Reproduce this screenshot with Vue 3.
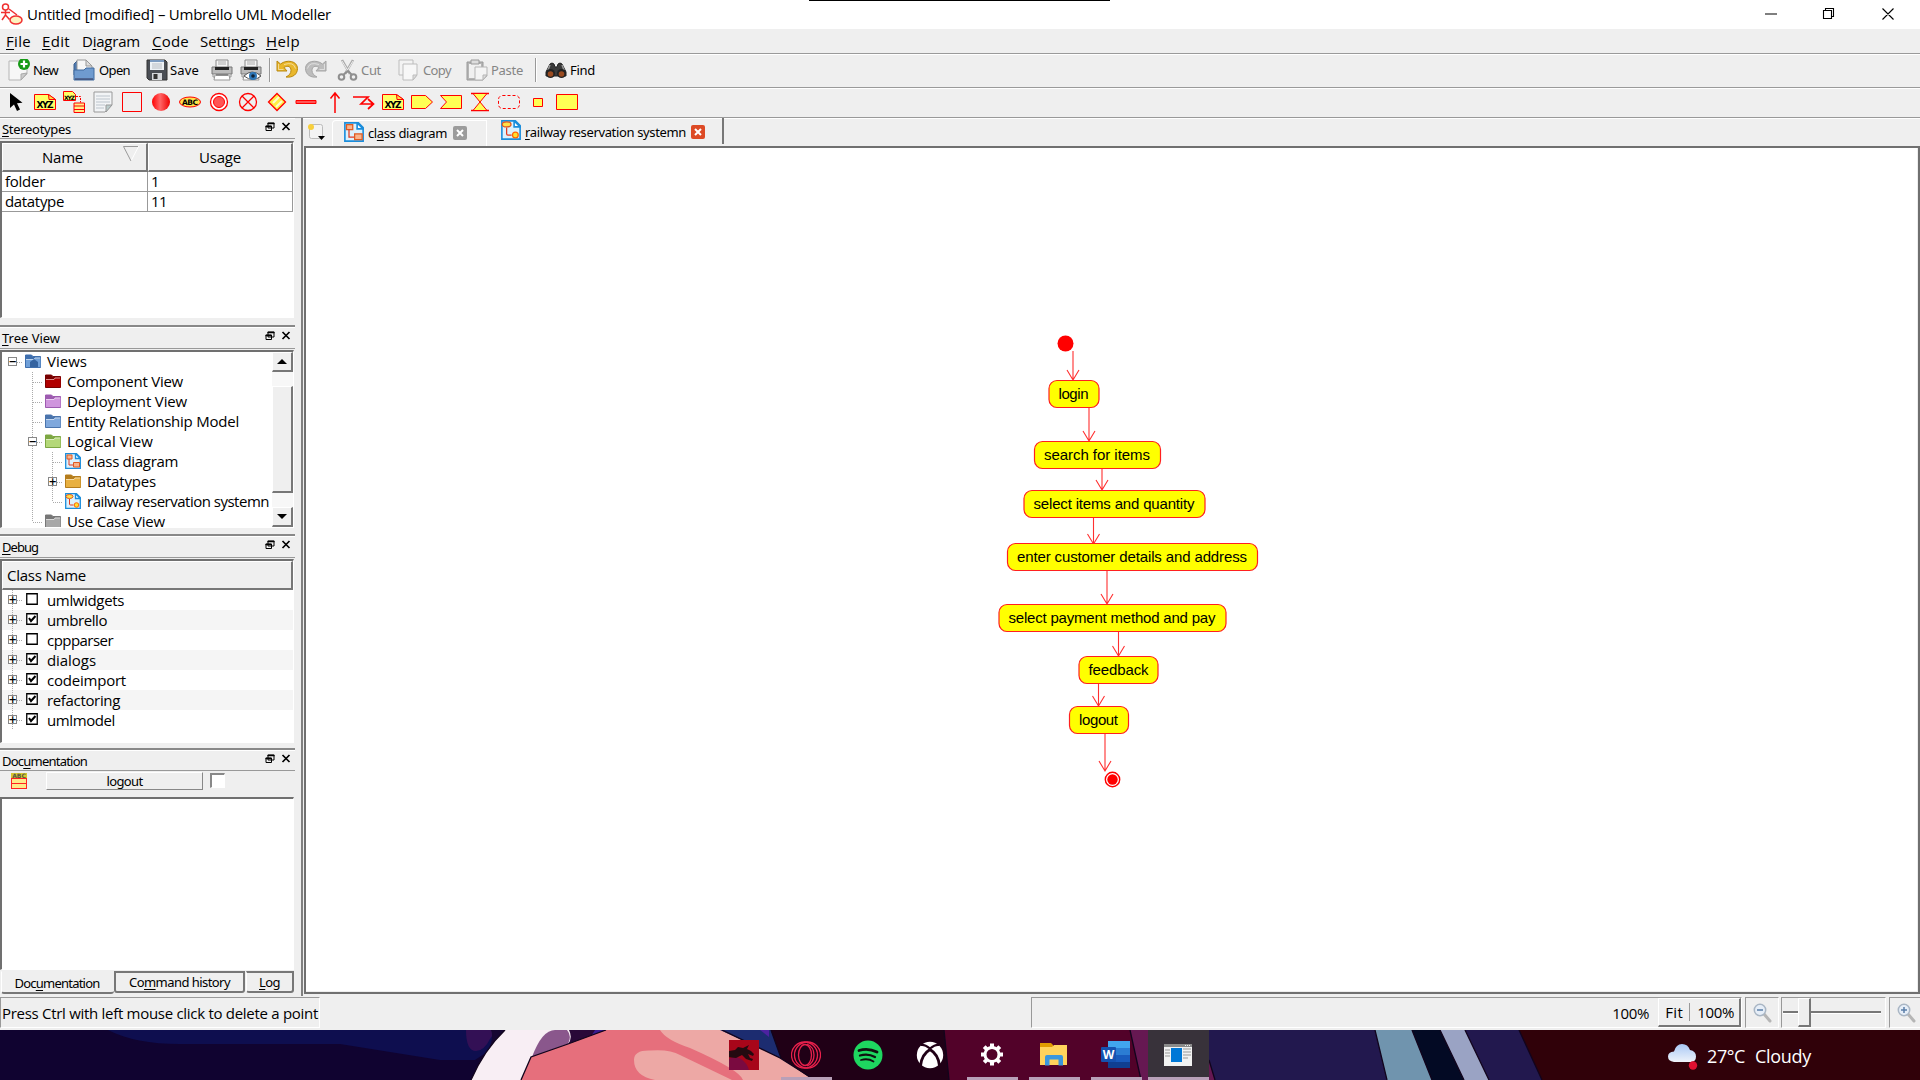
<script setup>
import { h, ref, onMounted } from 'vue'

// Text label: "&" marks the mnemonic letter, w is the advance width of the text
const Lbl = {
  props: { t: String, w: Number },
  setup(props) {
    const el = ref(null)
    onMounted(() => {
      if (!props.w) return
      const n = props.t.replace('&', '').length
      const now = el.value.getBoundingClientRect().width
      el.value.style.letterSpacing = (props.w - now) / n + 'px'
    })
    return () => {
      const i = props.t.indexOf('&')
      const kids = i < 0 ? [props.t] : [props.t.slice(0, i), h('u', props.t[i + 1]), props.t.slice(i + 2)]
      return h('span', { ref: el, class: 'lbl' }, kids)
    }
  },
}

const menus = [
  ['&File', 25, 36], ['&Edit', 28, 40], ['D&iagram', 58, 70], ['&Code', 37, 48], ['Setti&ngs', 55, 66], ['&Help', 34, 40],
]

const printer = `<path d="M5 1h12v9H5z" fill="#f4f4f4" stroke="#888"/><path d="M7 3h8M7 5h8" stroke="#aaa"/><path d="M1 8h20v7H1z" fill="#bbb" stroke="#777"/><path d="M4 8h14v3H4z" fill="#222"/><path d="M2 15h18v3H2z" fill="#ececec" stroke="#999"/><path d="M4 16h14l1 5H3z" fill="#fff" stroke="#999"/><path d="M5 16h12" stroke="#555"/>`
const arrowBack = (a, b) => `<path d="M1 2v10h10L8 8.500c4-2.500 7-1 7 3 0 3-2 5-5 6.500 7 1 11.500-3 11.500-8.500C21.500 2 11 0 4.500 5z" fill="${a}" stroke="${b}"/><path d="M2.500 5v5.500h5M8 5.500q10-3 11.500 4" fill="none" stroke="#fff" opacity=".5"/>`
const actions = [
  { w: 65, t: 'New', tw: 25, g: 3, i: `<path d="M1 2h18v13l-6 6H1z" fill="#f7f7f7" stroke="#b5b5b5"/><path d="M19 14l-6 7v-6z" fill="#ccc" stroke="#aaa"/><circle cx="16" cy="5" r="6" fill="#169a16"/><path d="M16 1.500v7M12.500 5h7" stroke="#fff" stroke-width="2.200"/>` },
  { w: 73, t: 'Open', tw: 31, g: 4, i: `<path d="M1 5l3-3h6v14H1z" fill="#4f7ab0" stroke="#3b5f8d"/><path d="M4 1h9l6 6v8H4z" fill="#f6f6f6" stroke="#999"/><path d="M13 1v6h6z" fill="#ddd" stroke="#999"/><path d="M1 11h10l2-2h8v12H1z" fill="#6f9bcf" stroke="#416a9e"/><path d="M2 20h18" stroke="#335"/>` },
  { w: 65, t: 'Save', tw: 29, g: 2, i: `<path d="M1 1h18l2 2v18H3l-2-2z" fill="#4a4e55" stroke="#333"/><path d="M4 1h14v10H4z" fill="#eef2f6"/><path d="M4 1h14v2H4z" fill="#7d9bc0"/><path d="M6 5h10M6 7h10M6 9h10" stroke="#b8bcc2"/><path d="M6 14h10v7H6z" fill="#d5d8dc"/><path d="M7.500 15h4v5h-4z" fill="#333"/>` },
  { w: 29, i: printer },
  { w: 29, i: printer + `<path d="M4 17q8-8 17 0q-8 7-17 0z" fill="#fff" stroke="#555"/><circle cx="13" cy="17" r="4" fill="#2d77b8"/><circle cx="13" cy="17" r="1.800" fill="#123"/>` },
  { sep: 1, w: 7 },
  { w: 29, i: arrowBack('#e9b72c', '#b98810') },
  { w: 32, i: `<g transform="translate(22 0) scale(-1 1)">${arrowBack('#bdbdbd', '#a5a5a5')}</g>` },
  { w: 61, off: 1, t: 'Cut', tw: 20, g: 2, i: `<path d="M5 1l8 14M16 1L8 15" stroke="#aaa" stroke-width="2.500"/><path d="M5 2l8 13M16 2L8 15" stroke="#eee"/><circle cx="4.500" cy="18" r="2.800" fill="none" stroke="#8f8f8f" stroke-width="2"/><circle cx="16.500" cy="18" r="2.800" fill="none" stroke="#8f8f8f" stroke-width="2"/><path d="M6 16l5-4 4 4" fill="none" stroke="#8f8f8f" stroke-width="2"/>` },
  { w: 68, off: 1, t: 'Copy', tw: 28, g: 3, i: `<path d="M1 1h14v15H1z" fill="#f3f3f3" stroke="#bdbdbd"/><path d="M5 5h14v11l-4 5H5z" fill="#f7f7f7" stroke="#bdbdbd"/><path d="M19 16h-4v5z" fill="#ddd" stroke="#bdbdbd"/>` },
  { w: 69, off: 1, t: 'Paste', tw: 32, g: 3, i: `<path d="M1 3h16v18H1z" fill="#b5b5b5" stroke="#999"/><path d="M3 5h12v14H3z" fill="#f0f0f0"/><path d="M5 1h8v4H5z" fill="#ddd" stroke="#999"/><path d="M9 8h12v9l-4 4H9z" fill="#f4f4f4" stroke="#b5b5b5"/><path d="M21 16h-4v5z" fill="#ddd" stroke="#b5b5b5"/>` },
  { sep: 1, w: 10 },
  { w: 60, t: 'Find', tw: 25, g: 3, i: `<path d="M5 5q2-2 4 0l1 3h2l1-3q2-2 4 0l4 8v4H1v-4z" fill="#3a3a3a" stroke="#222"/><path d="M5 6l-2 5M17 6l2 5" stroke="#999" stroke-width="1.500"/><circle cx="5.500" cy="14.500" r="4.500" fill="#222"/><circle cx="16.500" cy="14.500" r="4.500" fill="#222"/><circle cx="5.500" cy="15" r="2.800" fill="#9a4b20"/><circle cx="16.500" cy="15" r="2.800" fill="#9a4b20"/>` },
]

const R = 'stroke="#f00"'
const xyz = `<path d="M0.500 3.500h14l7 5v10h-21z" fill="#ff6" ${R}/><path d="M14.500 3.500l.5 5h6.500z" fill="#fd4" ${R}/><text x="11" y="17" font-size="9" font-weight="bold" text-anchor="middle" textLength="17" font-family="DejaVu Sans">XYZ</text>`
const tools = [
  `<path d="M5 2v15l4-3.500 3 6.500 3-1.500-3-6.300 5.500-.5z" fill="#000"/>`,
  xyz,
  `<path d="M0.500 0.500h9l3 3v6h-12z" fill="#ff6" ${R}/><text x="6.500" y="8.500" font-size="6" font-weight="bold" text-anchor="middle" textLength="11" font-family="DejaVu Sans">XYZ</text><path d="M13 5.500h4.500v6" fill="none" ${R} stroke-dasharray="2 1"/><path d="M11 12h10.500v9.500H11z" fill="#fe8" ${R}/><path d="M11 15h10M11 18.500h10" ${R}/>`,
  `<path d="M2 1h18v13l-7 7H2z" fill="#f2f4f6" stroke="#999"/><path d="M4 5h14M4 8h14M4 11h14M4 14h9M4 17h8" stroke="#bcc4cc"/><path d="M20 14h-6v7z" fill="#bcc" stroke="#999"/>`,
  `<path d="M1.500 1.500h19v19h-19z" fill="none" ${R}/>`,
  `<defs><linearGradient id="ball"><stop offset="0" stop-color="#f00"/><stop offset=".45" stop-color="#f66"/><stop offset="1" stop-color="#e00"/></linearGradient></defs><circle cx="11" cy="11" r="9" fill="url(#ball)"/>`,
  `<ellipse cx="11" cy="11" rx="10.500" ry="5" fill="#ffe24a" ${R}/><text x="11" y="13.800" font-size="7.500" font-weight="bold" text-anchor="middle" textLength="16" font-family="DejaVu Sans">ABC</text>`,
  `<circle cx="11" cy="11" r="8.500" fill="#fff" ${R} stroke-width="1.300"/><circle cx="11" cy="11" r="5.500" fill="#f55" ${R}/>`,
  `<circle cx="11" cy="11" r="8.500" fill="none" ${R} stroke-width="1.300"/><path d="M5 5l12 12M17 5L5 17" ${R} stroke-width="1.300"/>`,
  `<path d="M11 2.500l8.500 8.500-8.500 8.500L2.500 11z" fill="#fe4" ${R} stroke-width="1.300"/><path d="M7 12l6-6M10 16l6-6" stroke="#fffbd0" stroke-width="2"/>`,
  `<path d="M1 9.500h20v3H1z" fill="#f55" ${R}/>`,
  `<path d="M11 22V2M6.500 7.500L11 2l4.500 5.500" fill="none" ${R} stroke-width="1.500"/>`,
  `<path d="M0 6h15L8 13h12M15 8l5.500 5-5.500 5" fill="none" ${R} stroke-width="1.700"/>`,
  xyz,
  `<path d="M0.500 4.500h14l7 6.500-7 6.500h-14z" fill="#ff5" ${R}/>`,
  `<path d="M0.500 4.500h21v13h-21l6-6.500z" fill="#ff5" ${R}/>`,
  `<path d="M2 2.500h18M2 19.500h18" ${R} stroke-width="1.500"/><path d="M4 2.500h14L4 19.500h14z" fill="#ff5" ${R}/>`,
  `<rect x=".5" y="4.500" width="21" height="13" rx="4" fill="none" ${R} stroke-dasharray="3 2"/>`,
  `<path d="M6.500 7.500h9v8h-9z" fill="#ff5" ${R}/>`,
  `<path d="M0.500 3.500h21v15h-21z" fill="#ff5" ${R}/>`,
]

const folder = (a, b) => `<path d="M0.500 2h6l1.500 1.500h7.500V14.500H.5z" fill="${b}" stroke="${b}"/><path d="M1 6h8l1-1.500h5.500V14H1z" fill="${a}"/><path d="M1 6.500h8l1-1.500h5" fill="none" stroke="#fff" opacity=".55"/>`
const sheet = `<path d="M0.700 0.700h10.800l3.800 3.800v10.800H.7z" fill="#dcf1fd" stroke="#1b8ddb" stroke-width="1.300"/><path d="M10.500.7v4.800h4.800z" fill="#fff" stroke="#1b8ddb" stroke-width="1.300"/>`
const classIcon = sheet + `<path d="M2 2h5v4H2zM8.500 9.500h6v4.500h-6z" fill="#f9b48c" stroke="#e05a20"/><path d="M4 6v6h4" fill="none" stroke="#e03a20"/>`
const actIcon = sheet + `<ellipse cx="4.500" cy="3.500" rx="3.500" ry="2" fill="#ffe04a" stroke="#e05a20"/><path d="M4.500 6v5q0 1 1 1h3" fill="none" stroke="#e03a20"/><circle cx="11.500" cy="12" r="2.300" fill="#ffdf30" stroke="#f60"/>`

const tree = [
  { d: 0, box: '−', t: 'Views', w: 40, i: folder('#6f9fd8', '#3f6fae') + '<path d="M5 14V9l4-3 4 3v5z" fill="#3463a0"/>' },
  { d: 1, t: 'Component View', w: 116, i: folder('#b00000', '#780000') },
  { d: 1, t: 'Deployment View', w: 120, i: folder('#cf95dd', '#9d5bb0') },
  { d: 1, t: 'Entity Relationship Model', w: 172, i: folder('#7fa8dc', '#4a74ac') },
  { d: 1, box: '−', t: 'Logical View', w: 86, i: folder('#b4d878', '#7da743') },
  { d: 2, t: 'class diagram', w: 91, i: classIcon },
  { d: 2, box: '+', t: 'Datatypes', w: 69, i: folder('#e8b040', '#b57d1c') },
  { d: 2, t: 'railway reservation systemn', w: 182, i: actIcon },
  { d: 1, t: 'Use Case View', w: 98, i: folder('#a8a8a8', '#777') },
]
const classes = [
  ['umlwidgets', 0, 77], ['umbrello', 1, 60], ['cppparser', 0, 66], ['dialogs', 1, 49],
  ['codeimport', 1, 79], ['refactoring', 1, 73], ['umlmodel', 1, 68],
]

const nodes = [
  ['login', 1049, 380.5, 50, 30], ['search for items', 1034.5, 441.5, 126, 106], ['select items and quantity', 1024, 490.5, 181, 161],
  ['enter customer details and address', 1007.500, 543.5, 250, 230], ['select payment method and pay', 999, 604.5, 227, 207],
  ['feedback', 1079, 656.500, 79, 60], ['logout', 1069.500, 706.5, 59, 39],
]
const arrows = [
  [1073, 351, 380], [1089, 408, 441], [1102, 468.500, 490], [1093.500, 518, 544], [1107, 571, 604],
  [1118.500, 632, 656], [1098.500, 684, 706], [1105, 734, 771],
]

const apps = [
  { run: 0, i: `<rect width="30" height="30" fill="#a8061a"/><path d="M0 19q6-4 12 0 6 4 8 11H0z" fill="#7a0a40"/><path d="M0 11l6-1 3-3 5 1 6-3-2 4 4 2 3 3-1 2-5-2 2 4 3 1-1 2-6-2-4-4-6 3-9-1z" fill="#240a10"/>` },
  { run: 1, i: `<g fill="none" stroke="#e8204c" stroke-width="1.300"><circle cx="13.500" cy="15" r="13"/><circle cx="16.500" cy="15" r="13"/><ellipse cx="14" cy="15" rx="6.500" ry="10.500"/><path d="M16 4q7 3 7 11t-7 11"/></g>` },
  { run: 0, i: `<circle cx="15" cy="15" r="14.500" fill="#1ed760"/><g fill="none" stroke="#101010" stroke-linecap="round"><path d="M6 10.500q9-3 18 1.500" stroke-width="2.800"/><path d="M7 15.500q8-2.500 15 1.500" stroke-width="2.300"/><path d="M8 20q7-2 12.500 1.500" stroke-width="1.800"/></g>` },
  { run: 0, i: `<g transform="translate(1.500 1.500)"><circle cx="13.500" cy="13.500" r="13.200" fill="#fff"/><path d="M4 3.500q4-1 9.500 3.500 5.500-4.500 9.500-3.500" fill="none" stroke="#200016" stroke-width="2.200"/><path d="M13.500 8Q5 13 4 24.500M13.500 8Q22 13 23 24.500" fill="none" stroke="#200016" stroke-width="2.800"/></g>` },
  { run: 1, i: `<g stroke="#fff" fill="none"><circle cx="15" cy="14.500" r="7" stroke-width="3"/><path stroke-width="4" d="M15 3.500v3.500M15 22v3.500M4 14.500h3.500M22.500 14.500H26M7.200 6.700l2.500 2.500M20.300 19.800l2.500 2.500M22.800 6.700l-2.500 2.500M9.700 19.800l-2.500 2.500"/></g>` },
  { run: 1, i: `<path d="M1 3h11l2 2v6H1z" fill="#e09b00"/><path d="M1 7h12l2-2h13v20H1z" fill="#ffd35c"/><path d="M6 25.500V17q0-2 2-2h14q2 0 2 2v8.500h-4.500V19.500h-9v6z" fill="#3a97dd"/>` },
  { run: 1, i: `<path d="M7 1h22v7H7z" fill="#41a5ee"/><path d="M7 8h22v7H7z" fill="#2b7cd3"/><path d="M7 15h22v7H7z" fill="#185abd"/><path d="M7 22h22v6H7z" fill="#103f91"/><rect x="0" y="7" width="15" height="15" rx="1" fill="#1552b0"/><text x="7.500" y="19" fill="#fff" font-size="12" font-weight="bold" text-anchor="middle" font-family="Open Sans">W</text>` },
  { run: 1, on: 1, i: `<path d="M1 4h28v22H1z" fill="#f2f2f2"/><path d="M1 4h28v3H1z" fill="#8a8a8a"/><path d="M22 5.500h6" stroke="#eee" stroke-dasharray="1 1"/><path d="M8 8h11v14H8z" fill="#0078d7"/><path d="M2 10h5M2 13h5M2 16h5M20 9h8M20 12h8M20 15h8M20 18h5" stroke="#999"/>` },
]
const floatIcon = `<path d="M3 1h6v5H3zM1 4h5.500v4.500H1z" fill="#efefef" stroke="#000"/><path d="M2.500 1.500h7M.5 4.500h6" stroke="#000" stroke-width="1.500"/>`
const closeIcon = `<path d="M1.500 1l7 7M8.500 1l-7 7" stroke="#000" stroke-width="1.700"/>`
const lens = (p) => `<path d="M11 11l6 7" stroke="#b5b5b5" stroke-width="3" stroke-linecap="round"/><circle cx="7" cy="7" r="5.700" fill="#e6eef8" stroke="#a9b6c4" stroke-width="1.500"/><path d="${p}" stroke="#5b7fa8" stroke-width="1.500"/>`
</script>

<template>
  <div class="screen">
    <header class="title">
      <svg width="22" height="22" viewBox="0 0 22 22" fill="none" stroke="#f03030" stroke-width="1.500"><circle cx="4.500" cy="4" r="3"/><path d="M4.500 7v5L1 17M4.500 12l4 4.500M0 9.500h9M8 6l8 6"/><ellipse cx="15" cy="17" rx="6" ry="4" fill="#fdf3c0"/></svg>
      <Lbl t="Untitled [modified] – Umbrello UML Modeller" :w="304" />
      <div class="notch"></div>
      <svg class="winbtns" width="130" height="14" viewBox="0 0 130 14" fill="none" stroke="#000" stroke-width="1.100"><path d="M0 7h12M58.500 3.500h8v8h-8zM60.500 3.500v-2h8v8h-2M117.500 1.500l11 11M128.500 1.500l-11 11"/></svg>
    </header>
    <nav class="menu"><div v-for="m in menus" :key="m[0]" :style="{ width: m[2] + 'px' }"><Lbl :t="m[0]" :w="m[1]" /></div></nav>
    <div class="bar actions">
      <div v-for="(a, k) in actions" :key="k" class="act" :class="{ off: a.off, sep: a.sep }" :style="{ width: a.w + 'px' }">
        <svg v-if="a.i" width="22" height="22" viewBox="0 0 22 22" v-html="a.i"></svg>
        <Lbl v-if="a.t" :t="a.t" :w="a.tw" :style="{ marginLeft: a.g + 'px' }" />
      </div>
    </div>
    <div class="bar tools"><div v-for="(t, k) in tools" :key="k"><svg width="22" height="22" viewBox="0 0 22 22" v-html="t"></svg></div></div>

    <main>
      <aside>
        <section class="dock d1">
          <div class="dh"><Lbl t="&Stereotypes" :w="69" /><svg width="10" height="10" v-html="floatIcon"></svg><svg width="10" height="10" v-html="closeIcon"></svg></div>
          <div class="frame">
            <div class="thead"><div class="hc name"><Lbl t="Name" :w="41" /><svg width="16" height="16"><path d="M15.500.5L8 15" stroke="#fff"/><path d="M15 .5H.5L8 15" fill="none" stroke="#999"/></svg></div><div class="hc"><Lbl t="Usage" :w="42" /></div></div>
            <div class="tr"><div><Lbl t="folder" :w="40" /></div><div><Lbl t="1" /></div></div>
            <div class="tr"><div><Lbl t="datatype" :w="59" /></div><div><Lbl t="11" :w="16" /></div></div>
          </div>
        </section>
        <section class="dock d2">
          <div class="dh"><Lbl t="&Tree View" :w="58" /><svg width="10" height="10" v-html="floatIcon"></svg><svg width="10" height="10" v-html="closeIcon"></svg></div>
          <div class="frame treeframe">
            <div class="tree">
              <div v-for="n in tree" :key="n.t" class="node" :class="'l' + n.d">
                <i v-if="n.d == 2" class="rail r1"></i>
                <span class="stem"><b v-if="n.box" class="box">{{ n.box }}</b></span>
                <svg width="16" height="16" viewBox="0 0 16 16" v-html="n.i"></svg>
                <Lbl :t="n.t" :w="n.w" />
              </div>
            </div>
            <div class="scroll"><div class="sb up"></div><div class="thumb"></div><div class="sb down"></div></div>
          </div>
        </section>
        <section class="dock d3">
          <div class="dh"><Lbl t="&Debug" :w="36" /><svg width="10" height="10" v-html="floatIcon"></svg><svg width="10" height="10" v-html="closeIcon"></svg></div>
          <div class="frame">
            <div class="hc cls"><Lbl t="Class Name" :w="79" /></div>
            <div v-for="c in classes" :key="c[0]" class="row">
              <span class="stem"><b class="box">+</b></span>
              <svg class="chk" width="12" height="12"><path d="M.75.75h10.500v10.500H.75z" fill="#fff" stroke="#000" stroke-width="1.300"/><path v-if="c[1]" d="M3 5l2 3 4.500-5" fill="none" stroke="#000" stroke-width="2"/></svg>
              <Lbl :t="c[0]" :w="c[2]" />
            </div>
          </div>
        </section>
        <section class="dock d4">
          <div class="dh"><Lbl t="Doc&umentation" :w="85" /><svg width="10" height="10" v-html="floatIcon"></svg><svg width="10" height="10" v-html="closeIcon"></svg></div>
          <div class="docrow">
            <svg width="16" height="16"><path d="M.5.5h15v15H.5z" fill="#ffe98a"/><path d="M0 0h16v5H0z" fill="#d8c830"/><path d="M0 5.500h16M0 10.500h16M0 15.500h16M.5 5v11M15.500 5v11" stroke="#f22"/><text x="8" y="5" font-size="6" font-weight="bold" text-anchor="middle" fill="#554" font-family="DejaVu Sans">ABC</text></svg>
            <div class="docbtn"><Lbl t="logout" :w="36" /></div><div class="doccheck"></div>
          </div>
          <div class="frame"></div>
          <div class="dtabs"><div class="dt on"><Lbl t="Doc&umentation" :w="85" /></div><div class="dt cmd"><Lbl t="Co&mmand history" :w="101" /></div><div class="dt log"><Lbl t="&Log" :w="21" /></div></div>
        </section>
      </aside>
      <div class="work">
        <div class="tabs">
          <svg class="newtab" width="20" height="18"><rect x="2.500" y="1.500" width="13" height="14" rx="2" fill="#f3f3f3" stroke="#bbb"/><circle cx="4" cy="4" r="3" fill="#f7cf3c"/><path d="M11 13h7l-3.500 4z" fill="#000"/></svg>
          <div class="tab t1"><svg width="20" height="20" viewBox="0 0 16 16" v-html="classIcon"></svg><Lbl t="cl&ass diagram" :w="79" /><svg width="14" height="14"><rect width="14" height="14" rx="2" fill="#9c9c9c"/><path d="M4 4l6 6M10 4l-6 6" stroke="#fff" stroke-width="2"/></svg></div>
          <div class="tab t2"><svg width="20" height="20" viewBox="0 0 16 16" v-html="actIcon"></svg><Lbl t="&railway reservation systemn" :w="161" /><svg width="14" height="14"><rect width="14" height="14" rx="2" fill="#dd4a25"/><path d="M4 4l6 6M10 4l-6 6" stroke="#fff" stroke-width="2"/></svg></div>
        </div>
        <div class="canvas">
          <svg width="1612" height="844" viewBox="306 148 1612 844">
            <circle cx="1065.500" cy="343.500" r="8" fill="red"/>
            <g fill="none" stroke="#ff3030" stroke-width="1.100"><path v-for="a in arrows" :key="a[0]" :d="`M${a[0]} ${a[1]}V${a[2]}M${a[0] - 6} ${a[2] - 10}L${a[0]} ${a[2]}L${a[0] + 6} ${a[2] - 10}`"/></g>
            <g v-for="n in nodes" :key="n[0]">
              <rect :x="n[1]" :y="n[2]" :width="n[3]" height="27" rx="8" fill="#ff0" stroke="#ff2020" stroke-width="1.200"/>
              <text :x="n[1] + 9.500" :y="n[2] + 18.900" :textLength="n[4]" class="nt">{{ n[0] }}</text>
            </g>
            <circle cx="1112.500" cy="779.500" r="7.200" fill="#fff" stroke="red" stroke-width="1.400"/><circle cx="1112.500" cy="779.500" r="5.200" fill="red"/>
          </svg>
        </div>
      </div>
    </main>

    <footer class="status">
      <div class="cell msg"><Lbl t="Press Ctrl with left mouse click to delete a point" :w="316" /></div>
      <div class="cell zoomval"><Lbl t="100%" :w="37" /><div class="fit"><Lbl t="Fit" :w="18" /><i></i><Lbl t="100%" :w="37" /></div></div>
      <div class="cell lens"><svg width="20" height="20" v-html="lens('M4 7h6')"></svg></div>
      <div class="cell slide"><i class="groove"></i><i class="knob"></i></div>
      <div class="cell lens last"><svg width="20" height="20" v-html="lens('M4 7h6M7 4v6')"></svg></div>
    </footer>

    <div class="taskbar">
      <svg class="wall" width="1920" height="50">
        <rect width="1920" height="50" fill="#100330"/>
        <path d="M108 0Q135 14 180 14H340L440 30H475L520 0z" fill="#0e0e4f"/>
        <path d="M466 0q0 21 10 21 8 0 14-12l6-9z" fill="#331055"/><path d="M490 20L505 0h-14q6 12-19 50z" fill="#160632"/>
        <path d="M560 0h62l-54 20z" fill="#290838"/><path d="M595 0h20l-25 8z" fill="#3a1c90"/>
        <path d="M471 50Q484 20 505 0H569Q573 8 568 14L532 27 521 50z" fill="#f8eef4"/>
        <path d="M532 27Q542 0 555 0H567Q572 6 568 14z" fill="#8a578c"/>
        <path d="M521 50L531 27 568 14 606 0H724L815 50z" fill="#e66f7c"/>
        <path d="M660 0H722L780 28 815 50H743Q740 40 690 18 666 10 660 0zM634 30Q634 20 650 20.500 670 19 680 25L732 50H655Q634 46 634 30z" fill="#eda8a5"/>
        <path d="M720 0H771L781 28z" fill="#1c2c70"/><path d="M760 0h9v7z" fill="#4d22a0"/>
        <path d="M771 0H944L949 50H813L781 28z" fill="#200016"/>
        <path d="M944 0H1130L1141 50H949z" fill="#520229"/><path d="M1130 0H1209V30L1215 50H1141z" fill="#661852"/>
        <path d="M1200 0H1520L1542 50H1215z" fill="#22184e"/>
        <path d="M1375 0H1412L1432 50H1387z" fill="#7094ae"/><path d="M1412 0H1440L1464 50H1432z" fill="#030a24"/><path d="M1440 0H1465L1489 50H1464z" fill="#9aa3c4"/>
        <path d="M1519 0H1920V50H1542z" fill="#300109"/>
        <path d="M471 50Q484 20 505 0M521 50L531 27 568 14 606 0M722 0L780 28 815 50M771 0L781 28M944 0L949 50M1130 0L1141 50M1209 30L1215 50M1375 0L1387 50M1412 0L1432 50M1440 0L1464 50M1465 0L1489 50M1519 0L1542 50" fill="none" stroke="#12041c" stroke-width="1.300"/>
      </svg>
      <div class="apps"><div v-for="(a, k) in apps" :key="k" class="app" :class="{ run: a.run, on: a.on }"><svg width="30" height="30" v-html="a.i"></svg></div></div>
      <div class="weather">
        <svg width="30" height="28"><defs><linearGradient id="cl" x2="0" y2="1"><stop stop-color="#a9c8f5"/><stop offset="1" stop-color="#eef3fa"/></linearGradient></defs><path d="M6 19q-6-1-6-5.500Q0 9 6 8.500 8 1 14 1t8 6q6 1 6 6.500 0 5-5 5.500z" fill="url(#cl)"/><circle cx="25" cy="22.500" r="4.200" fill="#e01030"/></svg>
        <Lbl class="deg" t="27°C" :w="38" /><Lbl t="Cloudy" :w="56" />
      </div>
    </div>
  </div>
</template>

<style>
body { margin: 0; overflow: hidden; }
.lbl { display: inline-block; white-space: pre; flex: none; }
.lbl u { text-decoration: underline; text-decoration-thickness: 1px; text-underline-offset: 2px; }
</style>

<style scoped>
* { box-sizing: border-box; }
.screen { width: 1920px; height: 1080px; display: flex; flex-direction: column; background: #efefef; color: #000; font: 15px/20px 'Open Sans', 'Noto Sans', sans-serif; overflow: hidden; }
svg { display: block; flex: none; }
.title { height: 29px; background: #fff; display: flex; align-items: center; padding: 0 0 1px 1px; position: relative; flex: none; }
.title .lbl { margin: -1px 0 0 4px; }
.notch { position: absolute; left: 809px; top: 0; width: 301px; height: 1px; background: #000; }
.winbtns { margin-left: auto; margin-right: 25px; width: 130px; }
.menu { height: 24px; flex: none; display: flex; align-items: center; padding-left: 6px; }
.bar { flex: none; display: flex; align-items: center; border-top: 1px solid #9a9a9a; box-shadow: inset 0 1px #fff; font: 13px/18px 'Noto Sans', sans-serif; }
.actions { height: 34px; padding: 0 0 2px 8px; }
.act { display: flex; align-items: center; height: 24px; flex: none; }
.act.off { color: #858585; }
.act.sep { border-left: 1px solid #999; box-shadow: inset 1px 0 #fff; }
.tools { height: 30px; padding: 0 0 2px 1px; }
.tools > div { width: 29px; display: flex; justify-content: center; }
main { height: 879px; flex: none; display: flex; border-top: 1px solid #999; }
aside { width: 301px; display: flex; flex-direction: column; padding-right: 6px; background: #efefef; }
.dock { flex: none; display: flex; flex-direction: column; border-bottom: 2px solid #888; box-shadow: inset 0 1px #fff; }
.d1 { height: 209px; }
.d2 { height: 209px; }
.d3 { height: 214px; }
.d4 { height: 244px; border: 0; }
.dh { height: 21px; flex: none; display: flex; align-items: center; gap: 6px; padding: 2px 4px 0 2px; border-bottom: 1px solid #999; font: 13px/18px 'Noto Sans', sans-serif; }
.dh .lbl { margin-right: auto; }
.dh svg { margin-top: -4px; }
.frame { border: 1px solid #fff; border-top: 2px solid #707070; border-left: 2px solid #707070; background: #fff; overflow: hidden; flex: none; width: 294px; }
.d1 .frame { height: 177px; margin-top: 2px; }
.d2 .dh, .d3 .dh { height: 22px; padding-top: 0; }
.d2 .dh svg, .d3 .dh svg { margin-top: -3px; }
.treeframe { height: 178px; display: flex; margin-top: 1px; }
.d3 .frame { height: 184px; margin-top: 1px; }
.thead { display: flex; }
.hc { height: 29px; width: 145px; border: 1px solid #fff; border-right: 2px solid #777; border-bottom: 2px solid #777; background: #efefef; display: flex; align-items: center; justify-content: center; }
.hc.name { width: 146px; justify-content: flex-end; }
.hc.name .lbl { margin-right: 40px; }
.hc.name svg { margin: -6px 7px 0 0; }
.hc.cls { width: 291px; height: 29px; justify-content: flex-start; padding: 0 0 0 4px; }
.tr { display: flex; height: 20px; }
.tr > div { width: 145px; border-right: 1px solid #999; border-bottom: 1px solid #999; padding-left: 3px; line-height: 19px; }
.tr > div:first-child { width: 146px; }
.tree { width: 270px; height: 175px; overflow: hidden; position: relative; }
.node { display: flex; align-items: center; height: 20px; position: relative; }
.node > svg { margin-top: -2px; }
.node .lbl { margin: -2px 0 0 6px; }
.stem { width: 15px; height: 20px; margin-right: 3px; position: relative; flex: none; background: repeating-linear-gradient(90deg, #aaa 0 1px, transparent 1px 2px) 1px 10px / 14px 1px no-repeat, repeating-linear-gradient(180deg, #aaa 0 1px, transparent 1px 2px) 0 0 / 1px 20px no-repeat; }
.l0 { padding-left: 10px; }
.l0 .stem { background: repeating-linear-gradient(90deg, #aaa 0 1px, transparent 1px 2px) 1px 10px / 14px 1px no-repeat; width: 11px; margin-right: 2px; }
.l1 { padding-left: 30px; }
.l1 .stem { width: 11px; margin-right: 2px; }
.l2 { padding-left: 50px; }
.l2 .stem { width: 11px; margin-right: 2px; }
.node:nth-child(8) .stem, .node:nth-child(9) .stem { background-size: 14px 1px, 1px 10px; }
.rail { position: absolute; top: 0; width: 1px; height: 20px; background: repeating-linear-gradient(180deg, #aaa 0 1px, transparent 1px 2px); }
.r1 { left: 30px; }
.box { position: absolute; left: -4px; top: 5px; width: 9px; height: 9px; border: 1px solid #888; background: #fff; font: bold 10px/7px 'DejaVu Sans', sans-serif; text-align: center; text-indent: -.5px; }
.scroll { width: 21px; height: 175px; display: flex; flex-direction: column; justify-content: space-between; background: #f7f7f7; }
.sb, .thumb { border: 1px solid #fff; border-right: 2px solid #777; border-bottom: 2px solid #777; background: #efefef; }
.sb { height: 20px; display: flex; align-items: center; justify-content: center; }
.sb::after { content: ''; border: 5px solid transparent; border-top: 0; border-bottom-color: #000; }
.sb.down::after { border: 5px solid transparent; border-bottom: 0; border-top-color: #000; }
.thumb { height: 107px; }
.row { height: 20px; display: flex; align-items: center; padding-left: 10px; }
.row:nth-child(odd) { background: #f5f5f5; }
.row .stem { width: 10px; margin-right: 4px; }
.row .chk { margin-top: -3px; }
.row .lbl { margin: -1px 0 0 9px; }
.docrow { height: 26px; display: flex; padding: 1px 0 0 11px; flex: none; font: 13px/16px 'Noto Sans', sans-serif; }
.docrow > svg { margin-top: 1px; }
.docbtn { margin-left: 19px; width: 157px; height: 18px; border: 1px solid #fff; border-right-color: #888; border-bottom-color: #888; text-align: center; }
.doccheck { margin: 1px 0 0 7px; width: 15px; height: 15px; background: #fff; border: 1px solid #fff; border-top: 2px solid #888; border-left: 2px solid #888; }
.d4 .frame { height: 173px; }
.dtabs { display: flex; align-items: flex-start; margin-top: 1px; font: 13px/18px 'Noto Sans', sans-serif; }
.dt { text-align: center; height: 22px; border: 1px solid #fff; border-top: 2px solid #777; border-right: 2px solid #777; border-bottom: 2px solid #777; border-radius: 0 0 3px 3px; }
.dt.on { width: 113px; height: 23px; border-top: 1px solid #efefef; border-right: 0; margin-left: 1px; padding-right: 2px; line-height: 23px; }
.dt.cmd { width: 131px; border-left: 2px solid #777; }
.dt.log { width: 48px; margin-left: 1px; }
.work { width: 1619px; display: flex; flex-direction: column; border-left: 2px solid #808080; box-shadow: inset 0 1px #fff; }
.tabs { height: 28px; display: flex; padding-left: 4px; flex: none; font: 13px/20px 'Noto Sans', sans-serif; }
.newtab { margin-top: 5px; width: 20px; }
.tab { display: flex; align-items: flex-start; }
.t1 { margin: 2px 0 0 5px; width: 155px; padding-left: 11px; border-left: 1px solid #fff; border-top: 1px solid #fff; border-right: 1px solid #fff; border-radius: 4px 0 0 0; }
.t1 > svg { margin-top: 1px; }
.t1 .lbl { margin: 2px 6px 0 4px; }
.t1 > svg:last-child { margin-top: 5px; }
.t2 { width: 237px; padding-left: 14px; border-right: 2px solid #777; height: 26px; }
.t2 > svg { margin-top: 2px; }
.t2 .lbl { margin: 4px 5px 0 4px; }
.t2 > svg:last-child { margin-top: 7px; }
.canvas { height: 848px; margin-left: 1px; border: 2px solid #707070; background: #fff; box-shadow: inset -1px -1px #eee; overflow: hidden; }
.nt { font: 15px 'Liberation Sans', sans-serif; }
.status { height: 34px; flex: none; display: flex; padding-top: 1px; }
.cell { height: 31px; border-left: 1px solid #999; border-top: 1px solid #999; border-right: 1px solid #fff; border-bottom: 1px solid #fff; display: flex; align-items: center; }
.msg { width: 320px; margin-right: 711px; padding-left: 1px; }
.zoomval { width: 712px; justify-content: flex-end; }
.fit { margin-left: 9px; margin-right: 0; width: 83px; height: 29px; border: 1px solid #fff; border-right: 2px solid #777; border-bottom: 2px solid #777; display: flex; align-items: center; padding-left: 6px; }
.fit i { width: 1px; height: 18px; background: #999; margin: 0 7px 0 6px; }
.lens { width: 34px; margin-left: 3px; padding-left: 7px; }
.slide { width: 105px; margin-left: 2px; position: relative; }
.groove { width: 98px; height: 3px; margin-left: 1px; border-top: 2px solid #777; border-bottom: 1px solid #fff; }
.knob { position: absolute; left: 16px; top: 0; width: 13px; height: 29px; background: #efefef; border: 1px solid #fff; border-right: 2px solid #777; border-bottom: 2px solid #777; }
.last { width: 31px; border-right: 0; }
.taskbar { height: 50px; position: relative; display: flex; flex: none; color: #fff; }
.wall { position: absolute; left: 0; top: 0; }
.apps { position: relative; display: flex; margin-left: 713px; }
.app { width: 62px; height: 50px; display: flex; align-items: center; justify-content: center; position: relative; }
.app.run::after { content: ''; position: absolute; left: 6px; right: 5px; bottom: 0; height: 3px; background: #b8a0b8; }
.app.on { background: #38323a; width: 61px; margin-left: 1px; padding-right: 1px; }
.app.on::after { left: 0; right: 0; }
.weather { position: relative; display: flex; align-items: center; margin-left: 459px; font-size: 18px; line-height: 26px; }
.weather .lbl { margin-left: 10px; margin-top: 2px; }
.weather .deg { margin-left: 9px; }
.weather svg { margin-top: 3px; }
</style>
